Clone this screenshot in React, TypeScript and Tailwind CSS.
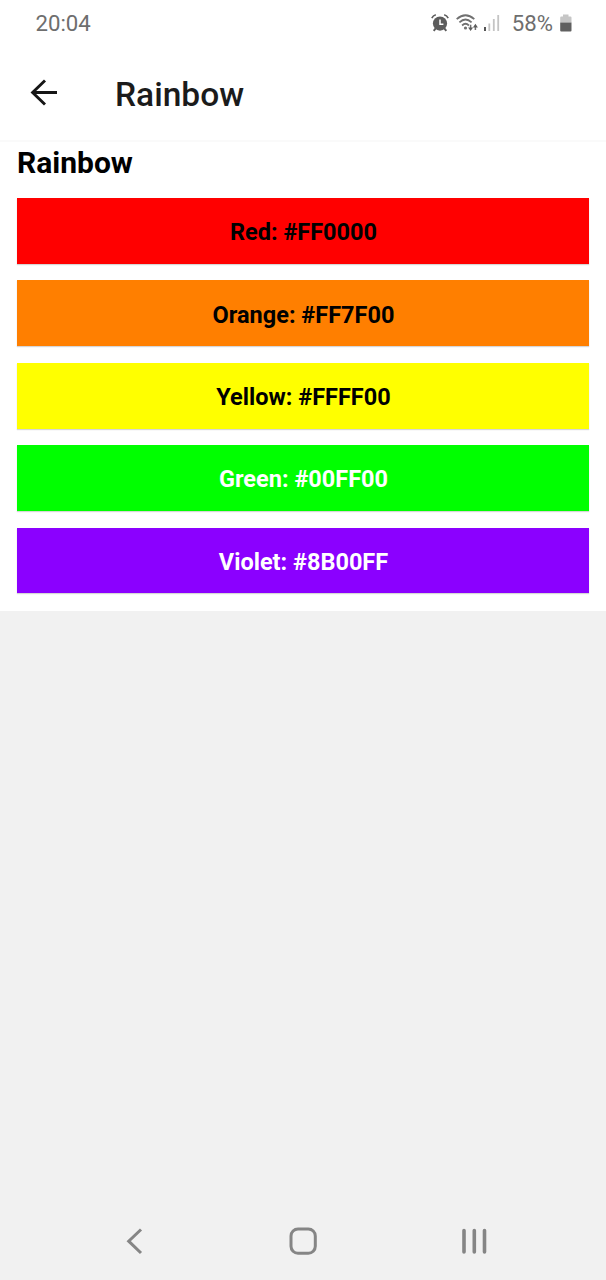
type Swatch = { name: string; hex: string; bg: string; fg: string };

const swatches: Swatch[] = [
  { name: 'Red', hex: '#FF0000', bg: 'bg-[#ff0000]', fg: 'text-black' },
  { name: 'Orange', hex: '#FF7F00', bg: 'bg-[#ff7f00]', fg: 'text-black' },
  { name: 'Yellow', hex: '#FFFF00', bg: 'bg-[#ffff00]', fg: 'text-black' },
  { name: 'Green', hex: '#00FF00', bg: 'bg-[#00ff00]', fg: 'text-white' },
  { name: 'Violet', hex: '#8B00FF', bg: 'bg-[#8b00ff]', fg: 'text-white' },
];

function AlarmIcon() {
  return (
    <svg width="18" height="18" viewBox="0 0 18 18" fill="none" stroke="#5c5c5c">
      <circle cx="9" cy="9.6" r="7.1" fill="#5c5c5c" stroke="none" />
      <path d="M.8 4.2Q2 1.6 4.8.8M13.2.8Q16 1.6 17.2 4.2" strokeWidth="1.6" />
      <path d="M4.7 14.4L2.7 16.8M13.3 14.4L15.3 16.8" strokeWidth="2" />
      <path d="M9 5.6V10.2H12.4" stroke="#fff" strokeWidth="1.5" />
    </svg>
  );
}

function WifiIcon() {
  return (
    <svg width="23" height="18" viewBox="0 0 23 18" fill="none" stroke="#707070">
      <path d="M.7 5.1Q9.5-2.6 18.3 5.1" strokeWidth="1.8" />
      <path d="M3.4 8.4Q9.5 2.7 15.6 8.4" strokeWidth="1.8" />
      <path d="M6.1 11.5Q9.5 8.1 12.9 11.5" strokeWidth="1.8" />
      <circle cx="9.5" cy="14" r="1.6" fill="#707070" stroke="none" />
      <path d="M14.6 10.8V15M19.4 16V12" strokeWidth="1.5" />
      <path d="M12.1 13.4H17.1L14.6 17ZM16.9 13.4H21.9L19.4 9.8Z" fill="#5c5c5c" stroke="none" />
    </svg>
  );
}

function SignalIcon() {
  return (
    <svg width="16" height="17" viewBox="0 0 16 17">
      <path d="M0 13H2V17H0Z" fill="#555" />
      <path d="M4.4 9.5H6.2V17H4.4ZM8.9 5H10.7V17H8.9ZM13.3 1H15.1V17H13.3Z" fill="#c4c4c4" />
    </svg>
  );
}

function BatteryIcon() {
  return (
    <svg width="12" height="18" viewBox="0 0 12 18">
      <path d="M3 .5H8.5V2.5H10.5Q11.5 2.5 11.5 3.5V8.5H.2V3.5Q.2 2.5 1.2 2.5H3Z" fill="#c6c6c6" />
      <path d="M.2 8.5H11.5V16.5Q11.5 17.5 10.5 17.5H1.2Q.2 17.5 .2 16.5Z" fill="#606060" />
    </svg>
  );
}

export default function App() {
  return (
    <div className="flex h-[1280px] w-[606px] flex-col overflow-hidden bg-[#f1f1f1] font-['Roboto',sans-serif]">
      <div className="flex h-12 shrink-0 items-center bg-white pr-[34px] pl-[35.5px] text-[22.2px] text-[#6e6e6e]">
        <span className="grow">20:04</span>
        <div className="flex items-center">
          <div className="pb-[2px]"><AlarmIcon /></div>
          <div className="ml-[7px] pb-[2px]"><WifiIcon /></div>
          <div className="ml-[5px] pb-[2px]"><SignalIcon /></div>
          <span className="ml-[12px]">58%</span>
          <div className="ml-[7px] pb-[2px]"><BatteryIcon /></div>
        </div>
      </div>
      <header className="flex h-[92px] shrink-0 items-center bg-white pl-[29px]">
        <svg className="mb-[2px]" width="28" height="28" viewBox="0 0 28 28" fill="none" stroke="#161616" strokeWidth="2.9">
          <path d="M28 13.5H3.5M16 1.5L3.6 13.5L16 25.5" />
        </svg>
        <h1 className="ml-[58px] pt-[2px] text-[33.5px] font-medium text-[#1b1b1b]">Rainbow</h1>
      </header>
      <main className="h-[470.5px] shrink-0 border-t-2 border-[#fafafa] bg-white px-[17px] pt-px">
        <h2 className="h-[55px] text-[30px] leading-[39px] font-bold text-black">Rainbow</h2>
        <div className="flex flex-col gap-[16.6px]">
          {swatches.map((s) => (
            <div
              key={s.name}
              className={`flex h-[65.8px] items-center justify-center pt-[4px] pl-px text-[23.5px] font-bold shadow-[0_1px_1px_rgba(0,0,0,0.16)] ${s.bg} ${s.fg}`}
            >
              {s.name}: {s.hex}
            </div>
          ))}
        </div>
      </main>
      <div className="grow" />
      <nav className="flex h-[78px] shrink-0 items-center justify-between pr-[119px] pl-[126px]">
        <svg width="17" height="28" viewBox="0 0 17 28" fill="none" stroke="#858585" strokeWidth="3">
          <path d="M15 2.5L2.7 14.2L15 26" />
        </svg>
        <svg className="ml-px" width="28" height="28" viewBox="0 0 28 28" fill="none" stroke="#858585" strokeWidth="3">
          <rect x="2" y="2" width="24.3" height="24.3" rx="7" />
        </svg>
        <svg width="25" height="28" viewBox="0 0 25 28" fill="none" stroke="#858585" strokeWidth="3.6" strokeLinecap="round">
          <path d="M2 3.5V25M12.3 3.5V25M22.5 3.5V25" />
        </svg>
      </nav>
    </div>
  );
}
